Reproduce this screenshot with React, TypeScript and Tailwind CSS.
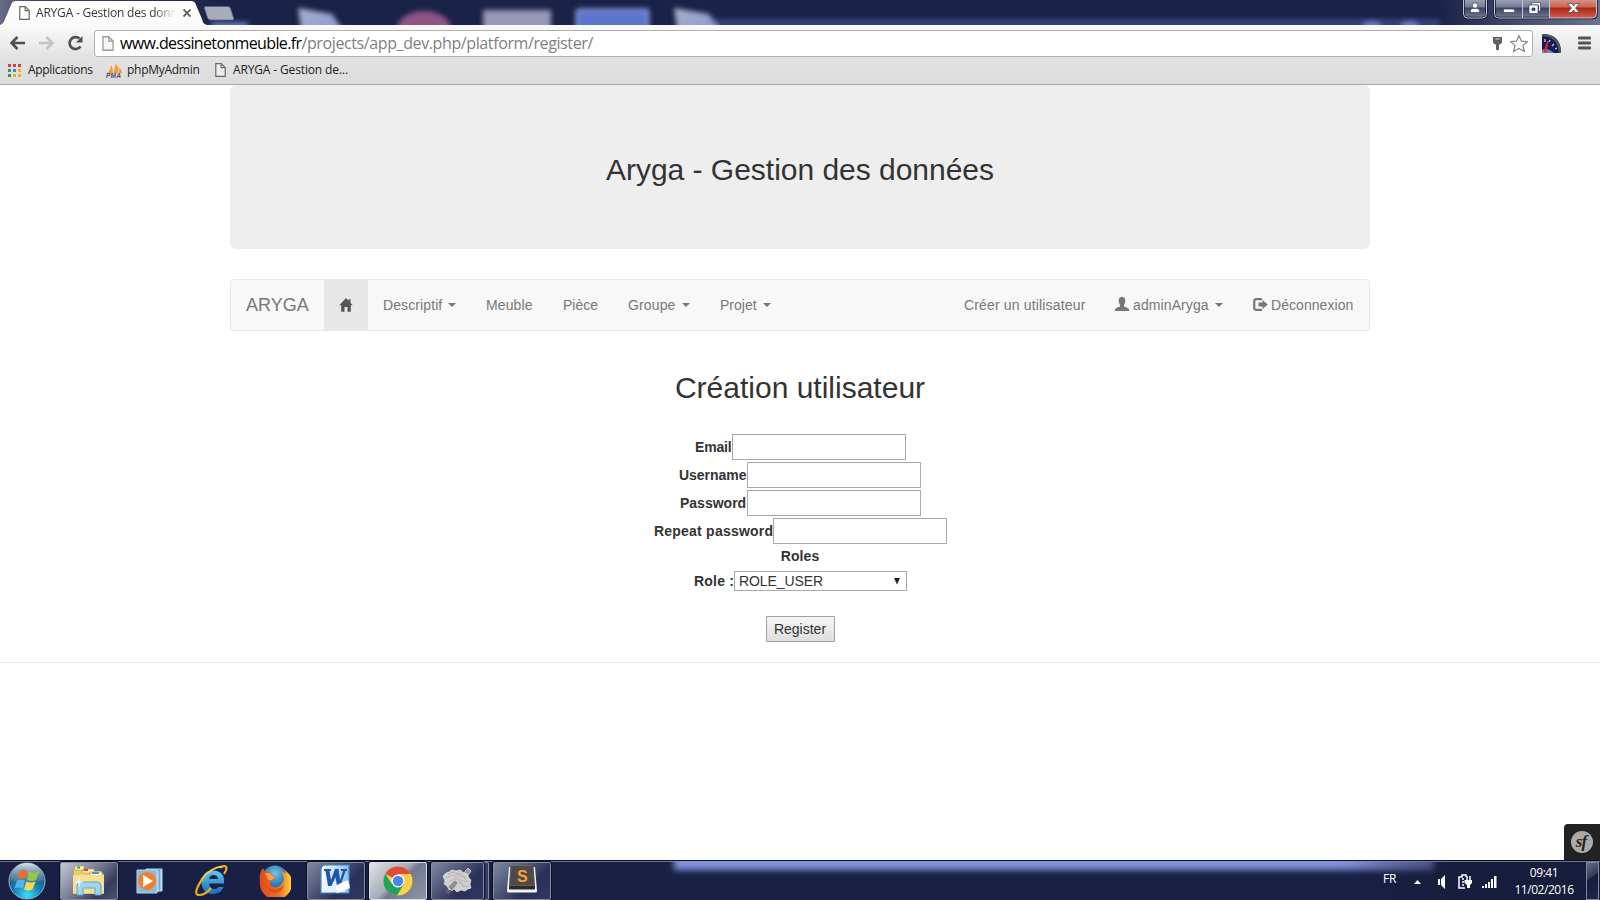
import type { ReactNode } from "react";

const UI = "font-['Open_Sans','Noto_Sans',sans-serif]";

function Page({ className = "", fill = "#fff", stroke = "#666" }: { className?: string; fill?: string; stroke?: string }) {
  return (
    <svg className={`shrink-0 ${className}`} viewBox="0 0 11 14" fill={fill} stroke={stroke} strokeWidth="1.2">
      <path d="M.8.7h5.4l4 4v8.600H.8z" />
      <path d="M6.200.7v4h4" fill="none" />
    </svg>
  );
}

function TitleBar() {
  return (
    <div className="relative h-[25px] overflow-hidden bg-[#1b2247]">
      <div className="absolute inset-0 bg-[linear-gradient(90deg,#686b88_0,#3d4263_35px,#1b2247_230px,#1b2247_1440px,#454c6e_1520px,#6a7391_1600px)]" />
      <svg className="absolute inset-0" width="1600" height="25">
        <defs>
          <filter id="soft" filterUnits="userSpaceOnUse" x="180" y="-10" width="1300" height="60"><feGaussianBlur stdDeviation="2.600" /></filter>
          <linearGradient id="folder" x1="0" y1="0" x2="1" y2="1"><stop offset="0" stopColor="#a9b2c4" /><stop offset="1" stopColor="#8593e2" /></linearGradient>
        </defs>
        <g filter="url(#soft)">
          <rect x="715" y="19" width="725" height="16" fill="#36427a" />
          <path d="M289 8l34 6 15 22h-45z" transform="translate(9)" fill="url(#folder)" />
          <ellipse cx="424" cy="29" rx="27" ry="18" fill="#8e5485" />
          <rect x="483" y="10" width="68" height="30" fill="#9898b8" />
          <rect x="577" y="10" width="71" height="30" rx="2" fill="#5c74cc" stroke="#8396df" strokeWidth="3" />
          <path d="M674 8l35 6 15 22h-46z" fill="url(#folder)" />
          <path d="M210 22h38v14h-30z" fill="#5e78bf" />
          <ellipse cx="1372" cy="26" rx="9" ry="5" fill="#6c7cc5" />
          <ellipse cx="1410" cy="26" rx="9" ry="5" fill="#6c7cc5" />
        </g>
        <defs><linearGradient id="tab" x1="0" y1="0" x2="0" y2="1"><stop offset="0" stopColor="#fff" /><stop offset="1" stopColor="#fafafa" /></linearGradient></defs>
        <path d="M0 25c3-1 4-3 5-6l6-14c1-3 2-4 5-4h174c4 0 5 1 6 4l6 14c1 4 2 5 5 6z" fill="url(#tab)" />
        <path d="M206 6.500h21c2 0 3 .5 3.500 2l3 9c.5 2 0 2.500-2 2.500h-20c-3 0-3.500-1-4-2.500l-3-9c-.5-1.500 0-2 1.500-2z" fill="#a6acba" stroke="#5b6181" strokeWidth=".7" />
      </svg>
      <div className={`relative flex h-[25px] items-center ${UI}`}>
        <Page className="ml-[19px] h-[14px] w-[11px]" />
        <span className="ml-[6px] w-[140px] overflow-hidden whitespace-nowrap bg-[linear-gradient(90deg,#333_118px,transparent_140px)] bg-clip-text text-[12px] leading-[18px] tracking-[-0.2px] text-transparent">ARYGA - Gestion des données</span>
        <svg className="ml-[7px]" width="8" height="8" stroke="#5c5c5c" strokeWidth="1.800"><path d="M.5.5l7 7M7.500.5l-7 7" /></svg>
      </div>
      <svg className="absolute right-0 top-0" width="140" height="20">
        <defs>
          <linearGradient id="cap" x1="0" y1="0" x2="0" y2="1"><stop offset="0" stopColor="#a5a9bc" /><stop offset=".45" stopColor="#777c96" /><stop offset=".5" stopColor="#3c4261" /><stop offset="1" stopColor="#737995" /></linearGradient>
          <linearGradient id="close" x1="0" y1="0" x2="0" y2="1"><stop offset="0" stopColor="#dc9d91" /><stop offset=".45" stopColor="#c76554" /><stop offset=".5" stopColor="#ae2613" /><stop offset="1" stopColor="#d4604c" /></linearGradient>
        </defs>
        <path d="M3.500-2v16q0 4 4 4h15q4 0 4-4v-16z" fill="url(#cap)" stroke="#14182f" strokeWidth="2.500" />
        <path d="M3.500-2v16q0 4 4 4h15q4 0 4-4v-16z" fill="none" stroke="#c2c6d3" strokeWidth="1" />
        <path d="M34.500-2v16q0 4 4 4h94q4 0 4-4v-16z" fill="url(#cap)" stroke="#14182f" strokeWidth="2.500" />
        <path d="M89.500-2v20h43q4 0 4-4v-16z" fill="url(#close)" />
        <path d="M34.500-2v16q0 4 4 4h94q4 0 4-4v-16zM62.500 0v18M89.500 0v18" fill="none" stroke="#c2c6d3" strokeWidth="1" />
        <g fill="#fff" stroke="#3b405a" strokeWidth=".7">
          <circle cx="15" cy="5.500" r="2.700" /><path d="M10.500 12.500v-2q0-2 2.500-2h4q2.500 0 2.500 2v2z" />
          <path d="M43.500 9h11v3.500h-11z" />
          <path d="M71.500 2.500h9v8.500h-2v-6h-7z" /><path fillRule="evenodd" d="M69 5h9v8.500h-9zM72 8v2.500h3v-2.500z" />
          <path d="M107.500 3.500h4l2 2.500 2-2.500h4l-4 4.500 4 4.500h-4l-2-2.500-2 2.500h-4l4-4.500z" />
        </g>
      </svg>
    </div>
  );
}

const appColors = ["bg-[#e33b3b]", "bg-[#e33b3b]", "bg-[#e33b3b]", "bg-[#2e9b57]", "bg-[#3f83e8]", "bg-[#f2b01e]", "bg-[#2e9b57]", "bg-[#f2b01e]", "bg-[#f2b01e]"];

function BrowserBars() {
  return (
    <div className={`h-[60px] border-b border-[#a9a9a9] bg-[linear-gradient(#fafafa_0,#e2e2e2_32px,#dcdcdc)] ${UI}`}>
      <div className="flex h-[32px] items-center pt-[4px]">
        <svg className="ml-[9px]" width="17" height="16" fill="none" stroke="#505050" strokeWidth="2.600"><path d="M16 8H3M8.500 2L2.500 8l6 6" /></svg>
        <svg className="ml-[12px]" width="17" height="16" fill="none" stroke="#c4c4c4" strokeWidth="2.600"><path d="M1 8h13M8.500 2l6 6-6 6" /></svg>
        <svg className="ml-[12px]" width="16" height="16" fill="none" stroke="#505050" strokeWidth="2.700"><path d="M13.500 11.500A6 6 0 1 1 12.500 3.500" /><path d="M15.500 1v6.500H9z" fill="#505050" stroke="none" /></svg>
        <div className="ml-[11px] flex h-[27px] w-[1439px] items-center rounded-[3px] border border-[#b0b0b0] bg-white">
          <Page className="ml-[7px] h-[15px] w-[12px]" stroke="#999" fill="#f7f7f7" />
          <span className="ml-[6px] mt-[-1px] whitespace-nowrap text-[16px] leading-[22px] text-black"><span className="tracking-[-0.63px]">www.dessinetonmeuble.fr</span><span className="tracking-[-0.39px] text-[#808080]">/projects/app_dev.php/platform/register/</span></span>
          <svg className="ml-auto" width="11" height="15" fill="#606060"><path d="M1 1h9v5.500l-2 2H7v5l-1.500 1-1.500-1v-5H3l-2-2z" /><path d="M3.500 3h4" stroke="#ddd" /></svg>
          <svg className="ml-[6px] mr-[3px]" width="20" height="19" fill="#fff" stroke="#858585" strokeWidth="1.200" strokeLinejoin="round"><path d="M10 1.500l2.500 5.700 6 .4-4.600 4 1.600 6L10 14.400l-5.500 3.200 1.600-6-4.600-4 6-.4z" /></svg>
        </div>
        <svg className="ml-[9px]" width="19" height="19">
          <path d="M0 0q19 0 19 19H0z" fill="#171b58" /><path d="M0 1q17 0 18 18" fill="none" stroke="#4e5952" strokeWidth="2.500" /><path d="M0 16q5-3 12 3H0z" fill="#6588bd" />
          <path d="M6 7L4 18H2z" fill="#f22" stroke="#f22" /><path d="M3 5v3M8 6l-1 2M12 10l-2 2M15 14l-2 1" stroke="#c4c9e6" strokeWidth="1.300" />
        </svg>
        <svg className="ml-[17px]" width="13" height="14" fill="#555"><rect width="13" height="3" rx="1" y=".5" /><rect width="13" height="3" rx="1" y="5.500" /><rect width="13" height="3" rx="1" y="10.500" /></svg>
      </div>
      <div className="flex h-[26px] items-center text-[12px] leading-[18px] text-[#222]">
        <div className="ml-[8px] grid h-[13px] w-[13px] grid-cols-3 gap-[2px]">{appColors.map((c, i) => <i key={i} className={c} />)}</div>
        <span className="ml-[7px] w-[66px] whitespace-nowrap tracking-[-0.3px]">Applications</span>
        <svg className="ml-[12px]" width="17" height="15"><path d="M1 10Q5 7 5 2q3 4 1 9zM7 10q3-5 2-10 5 5 3 10zM13 10q1-3 0-6 3 3 3 6z" fill="#f29a2e" /><text x="0" y="14.500" fontSize="6.500" fontFamily="Liberation Sans" fontWeight="bold" fontStyle="italic" fill="#474a7c" textLength="15">PMA</text></svg>
        <span className="ml-[4px] w-[73px] whitespace-nowrap tracking-[-0.28px]">phpMyAdmin</span>
        <Page className="ml-[15px] h-[14px] w-[11px]" fill="#eee" />
        <span className="ml-[7px] whitespace-nowrap tracking-[-0.14px]">ARYGA - Gestion de...</span>
      </div>
    </div>
  );
}

const Caret = () => <i className="ml-[6px] inline-block border-x-4 border-t-4 border-x-transparent border-t-[#777] align-middle" />;
const Item = ({ className, children }: { className: string; children: ReactNode }) => <a className={`flex h-[50px] shrink-0 items-center whitespace-nowrap pl-[15px] ${className}`}>{children}</a>;

function NavBar() {
  return (
    <nav className="mt-[30px] flex h-[52px] rounded-[4px] border border-[#e7e7e7] bg-[#f8f8f8] text-[14px] leading-[20px] text-[#777]">
      <Item className="w-[93px] text-[18px]">ARYGA</Item>
      <Item className="w-[44px] bg-[#e7e7e7]"><svg width="14" height="14" fill="#555"><path d="M7 0L.3 7.200h1.900V13.700H5.500V9h3v4.700h3.300V7.200h1.900L11.500 4.800V1.300h-2v1.400z" /></svg></Item>
      <Item className="w-[103px] tracking-[0.1px]">Descriptif<Caret /></Item>
      <Item className="w-[77px] tracking-[0.13px]">Meuble</Item>
      <Item className="w-[65px]">Pièce</Item>
      <Item className="w-[92px] tracking-[0.14px]">Groupe<Caret /></Item>
      <Item className="w-[81px]">Projet<Caret /></Item>
      <Item className="ml-auto w-[151px] tracking-[0.16px]">Créer un utilisateur</Item>
      <Item className="w-[138px] tracking-[0.1px]"><svg className="mr-[4px] mt-[-2px]" width="14" height="14" fill="#777"><path d="M7 0c2.300 0 3.500 1.600 3.300 4-.1 2-.8 3-1.300 3.800v1.500c0 .7 4.800 1.500 5 3V14H0v-1.700c.2-1.500 5-2.300 5-3V7.800C4.500 7 3.800 6 3.700 4 3.500 1.600 4.700 0 7 0z" /></svg>adminAryga<Caret /></Item>
      <Item className="w-[131px] tracking-[0.06px]"><svg className="mr-[3px] mt-[-2px]" width="15" height="13"><path d="M9 1.200H3.500Q1.200 1.200 1.200 3.500v6q0 2.300 2.300 2.300H9" fill="none" stroke="#777" strokeWidth="2.200" /><path d="M5.500 4.500H9.500V2l5.300 4.500-5.300 4.500V8.500h-4z" fill="#777" /></svg>Déconnexion</Item>
    </nav>
  );
}

function Field({ label, pad, width, spacing }: { label: string; pad: string; width: string; spacing: string }) {
  return (
    <div className={`flex h-[28px] items-center ${pad}`}>
      <label className={`shrink-0 whitespace-nowrap font-bold ${width} ${spacing}`}>{label}</label>
      <input className="h-[26px] w-[174px] border border-[#a9a9a9] bg-white px-1 outline-none" />
    </div>
  );
}

function Taskbar() {
  const btn = "flex h-[38px] shrink-0 items-center justify-center rounded-[2px] border border-[#858ba3] shadow-[0_0_0_1px_#0b1029]";
  const dark = "bg-[linear-gradient(135deg,#8087a2_0,#535b7b_35%,#29315a_65%,#2f3860)]";
  return (
    <footer className="relative flex h-[40px] w-full items-center overflow-hidden border-t border-[#0b102b] bg-[#192044]">
      <div className="absolute inset-x-0 top-0 h-px bg-[#6c7291]" />
      <div className="absolute left-[674px] top-[-7px] h-[16px] w-[760px] bg-[linear-gradient(90deg,#8493dc_660px,#666fa8)] blur-[3px]" />
      <div className="absolute right-0 top-[1px] h-[39px] w-[250px] bg-[linear-gradient(90deg,transparent,#141933_120px)] opacity-50" />
      <svg className="relative ml-[8px] shrink-0" width="38" height="38" viewBox="0 0 38 38">
        <defs>
          <radialGradient id="orb" cx=".5" cy=".9" r=".9"><stop offset="0" stopColor="#39dcff" /><stop offset=".45" stopColor="#147caf" /><stop offset="1" stopColor="#24445d" /></radialGradient>
          <linearGradient id="orbTop" x1="0" y1="0" x2="0" y2="1"><stop offset="0" stopColor="#d6e2eb" /><stop offset="1" stopColor="#597f9b" stopOpacity=".5" /></linearGradient>
        </defs>
        <circle cx="19" cy="19" r="18" fill="url(#orb)" stroke="#91b2c4" />
        <path d="M2 18a17 17 0 0 1 34 0q-17 5-34 0z" fill="url(#orbTop)" />
        <path d="M11.500 9q4-2.500 8 0l-2 8q-4-2-8 0z" fill="#ef6b2b" /><path d="M21 9.500q4 2 10 0l-3 8.500q-4 2-9 0z" fill="#98c64a" />
        <path d="M9 18.500q4-2 8 0l-2 8q-4-2-8.500 0z" fill="#59b1e9" /><path d="M18.500 19.500q4 2 9 0l-3 8q-4 2-8.500 0z" fill="#ffd64c" />
      </svg>
      <div className={`relative ml-[14px] w-[58px] ${btn} bg-[linear-gradient(135deg,#c6c9d4,#777c93_45%,#343b5e_75%,#4b526f)]`}>
        <svg width="34" height="31" viewBox="0 0 34 31">
          <path d="M2 3h10l2 3h15l3 4v19H1z" fill="#eacb72" /><path d="M3 1h9v4H3zM11 4h11v4H11zM18 7h12v4H18z" fill="#fff2b3" stroke="#a9924e" strokeWidth=".5" />
          <path d="M5 1.500h3v2H5z" fill="#26b33b" /><path d="M12 4h4v2h-4z" fill="#d64326" /><path d="M20 7h7v2h-7z" fill="#3a9fdc" />
          <path d="M1 10h31v18H1z" fill="#f4df94" /><path d="M5 30v-9q0-4 4-4h16q4 0 4 4v9h-6v-7H11v7z" fill="#9ed5ed" stroke="#5ba7cc" /><path d="M7 11l1 5 4 1-4 1-1 5-1-5-4-1 4-1z" fill="#e4fbff" />
        </svg>
      </div>
      <svg className="relative ml-[18px] shrink-0" width="28" height="26"><path d="M10 1h16v22H10z" fill="#6ea9d2" stroke="#bbddec" /><path d="M22 3v21M25 2v21" stroke="#d9f0fa" /><path d="M1 2h20v23H1z" fill="#8cb9d6" stroke="#b9d6e7" /><circle cx="11" cy="13" r="9" fill="#f57d27" /><path d="M7 7l10 6-10 6z" fill="#fff" /></svg>
      <svg className="relative ml-[31px] shrink-0" width="34" height="34" viewBox="0 0 34 34">
        <defs><linearGradient id="ie" x1="0" y1="0" x2="0" y2="1"><stop stopColor="#62c7f4" /><stop offset="1" stopColor="#166eb8" /></linearGradient></defs>
        <path fillRule="evenodd" d="M18 6.500c8 0 12 5 11 13H14c.5 4 3 5.500 6 5.500 2 0 3-1 3.500-2h5c-2 5-6 7-11 7-7 0-11-5-11-12S11 6.500 18 6.500zM14 15h9c-.4-3-2-4-4.500-4S14.500 12 14 15z" fill="url(#ie)" />
        <path d="M25 3.500c9-4 7 2 4 6.500M8 14C1 24-1 31 4 31c4 0 9-3 12-7" fill="none" stroke="#e9aa24" strokeWidth="2.200" /><path d="M7 15C12 8 20 3 27 2.500" fill="none" stroke="#f5cc48" strokeWidth="1.800" />
      </svg>
      <svg className="relative ml-[30px] shrink-0" width="32" height="32" viewBox="0 0 32 32">
        <defs>
          <linearGradient id="fox" x1="0" y1="0" x2="1" y2="0"><stop stopColor="#e2481f" /><stop offset=".6" stopColor="#ee7320" /><stop offset="1" stopColor="#ffd83f" /></linearGradient>
          <radialGradient id="globe" cx=".5" cy=".3" r=".6"><stop stopColor="#6fc4e8" /><stop offset="1" stopColor="#1d5f9f" /></radialGradient>
        </defs>
        <circle cx="16" cy="13.500" r="13" fill="url(#globe)" />
        <path d="M2 6l2-3 2 4 5 0 3 4 3 1.500-3 2.500-3 1 0 3q2 4 7 3 4-1 5-4 3-1 1-8l-3-5 6 4-1-4 4 4q4 5 3 11A15 14.800 0 0 1 1 17Q0 11 2 6z" fill="url(#fox)" />
        <path d="M8 21q4 5 10 3 5-1 7-5-1 8-8 9-7-1-9-7z" fill="#c93a1c" opacity=".6" />
        <path d="M6 8l5 0 3 3.500 2 1-4 3-3-1z" fill="#f7a24a" />
      </svg>
      <div className={`relative ml-[16px] w-[58px] ${btn} ${dark}`}>
        <svg className="mb-[3px] mr-[2px]" width="30" height="30" viewBox="0 0 30 30">
          <defs><linearGradient id="doc" x1="0" y1="0" x2="1" y2="0"><stop stopColor="#fff" /><stop offset="1" stopColor="#8dbdec" /></linearGradient></defs>
          <path d="M1 6q0-5 5-5h23v28H1z" fill="url(#doc)" stroke="#3e86cf" strokeWidth="1.200" /><path d="M3 18h22v10H3z" fill="#e9f2fb" />
          <path d="M4 5h7v2H9.500l1.500 9 4-11h3.500l1.500 11 3-9h-2V5h6v2h-1.500L20.500 22H17l-1.500-9-4 9H8L5.500 7H4z" fill="#1759a8" />
          <path d="M15 22l13-6 2 8-13 5z" fill="#fff" stroke="#c5d7ea" strokeWidth=".5" />
        </svg>
      </div>
      <div className={`relative ml-[4px] w-[58px] ${btn} border-[#d8dce3] bg-[linear-gradient(135deg,#e2e4e8,#a7abb8_45%,#737990_55%,#9094a5)]`}>
        <svg width="30" height="30" viewBox="0 0 30 30"><circle cx="15" cy="15" r="14.500" fill="#ffd048" /><path d="M15 15L2.300 7.800A14.500 14.500 0 0 1 27.700 8H15z" fill="#df4b3e" /><path d="M2.300 7.800A14.500 14.500 0 0 0 14 29.500l7-11.500H9z" fill="#23a25d" /><path d="M15 8h12.700L21 18.500z" fill="#ffd048" /><circle cx="15" cy="15" r="6.500" fill="#fff" /><circle cx="15" cy="15" r="5.200" fill="#4688ed" /></svg>
      </div>
      <div className={`relative ml-[4px] w-[53px] ${btn} ${dark}`}>
        <svg width="32" height="30" viewBox="0 0 32 30"><path d="M21 8L26 2l3 3-5 7z" fill="#999" stroke="#ddd" strokeWidth=".8" /><path d="M1 10l3-3 3-1 3-2 4 1 4-1 4 3 3 1 2 4 2 2-1 4 1 4-3 1-3 2-4-1-4 2-3-3-5 1-2-4-3-2 1-3z" fill="#cfcfcf" stroke="#efefef" strokeWidth=".6" /><path d="M6 8q5-3 9 0t9 3M4 12q7-5 12 0t10 3M8 16q6-6 10 0t8 4M15 7q7 1 9 8M10 19q8-6 12 2" fill="none" stroke="#999" strokeWidth=".8" strokeDasharray="1.500 1" /><path d="M6 21l7-7 3 3-6 8z" fill="#909090" stroke="#d0d0d0" strokeWidth=".7" /><path d="M4 22l5 4-3 3-3-3z" fill="#5c5c5c" /></svg>
      </div>
      <div className="h-[38px] w-[5px] rounded-r-[2px] border-y border-r border-[#858ba3] bg-[#333b60]" />
      <div className={`relative ml-[4px] w-[58px] ${btn} ${dark}`}>
        <svg className="mb-[4px]" width="32" height="28" viewBox="0 0 32 28"><path d="M3 2h26l2 24q0 1.500-1.500 1.500h-27Q1 27.500 1 26z" fill="#f5f5f5" /><path d="M5 1h22l2 20v2.500q0 1-1 1H4q-1 0-1-1V21z" fill="#2c2c2c" /><path d="M6 .5h20q1.500 0 1.500 1.500l1 18.500h-25L4.500 2q0-1.500 1.500-1.500z" fill="#4c4b49" stroke="#777" strokeWidth=".6" /><text x="11" y="16.500" fontFamily="Liberation Sans" fontSize="16" fontWeight="bold" fill="#ff9c38">S</text></svg>
      </div>
      <div className={`relative ml-auto flex h-full shrink-0 items-center text-white ${UI}`}>
        <span className="w-[15px] translate-y-[-2px] text-[12px] tracking-[-0.1px]">FR</span>
        <svg className="ml-[15px] mt-[2px]" width="9" height="5" fill="#fff"><path d="M1 5l3.500-4L8 5z" /></svg>
        <svg className="ml-[16px] mt-[2px]" width="8" height="14" fill="#fff"><path d="M0 4h2v6H0zM3 4l4-4v14l-4-4z" /></svg>
        <svg className="ml-[12px] mt-[2px]" width="14" height="15" fill="none" stroke="#fff" strokeWidth="1.500"><path d="M8 3V1H4v2H1v11h6M9 2v4M12 2v4" /><path d="M4 5h2M4 8h2M4 11h2" /><path d="M6.500 6h7.500v3l-2 2v3H9v-3L6.500 9z" fill="#fff" stroke="none" /></svg>
        <svg className="ml-[10px] mt-[2px]" width="15" height="12" fill="#fff"><path d="M0 10h2v2H0zM3 8h2v4H3zM6 6h2v6H6zM9 3h2v9H9zM12 0h2.500v12H12z" /></svg>
        <div className="ml-[15px] mt-[1px] w-[64px] text-center text-[12px] leading-[17px] tracking-[-0.46px]"><div>09:41</div><div>11/02/2016</div></div>
        <div className="ml-[10px] h-[38px] w-[13px] border border-[#8087a0] bg-[linear-gradient(145deg,#666c82,#353b57_38%,#151b3b_42%,#202747)]" />
        <i className="w-px" />
      </div>
    </footer>
  );
}

export default function App() {
  return (
    <div className="flex h-[900px] w-[1600px] flex-col overflow-hidden bg-white font-['Liberation_Sans',Arial,sans-serif] text-[14px] leading-[20px] text-[#333]">
      <TitleBar />
      <BrowserBars />
      <main className="flex min-h-0 flex-1 flex-col items-center">
        <div className="w-[1140px]">
          <header className="flex h-[164px] justify-center rounded-[6px] bg-[#eee] pt-[68px]"><h2 className="text-[30px] leading-[33px] tracking-[-0.02px]">Aryga - Gestion des données</h2></header>
          <NavBar />
        </div>
        <h2 className="mt-[40px] text-[30px] leading-[33px]">Création utilisateur</h2>
        <form className="mt-[29px] w-[1140px]">
          <Field label="Email" pad="pl-[465px]" width="w-[37px]" spacing="tracking-[-0.15px]" />
          <Field label="Username" pad="pl-[449px]" width="w-[68px]" spacing="tracking-[-0.02px]" />
          <Field label="Password" pad="pl-[450px]" width="w-[67px]" spacing="tracking-[0px]" />
          <Field label="Repeat password" pad="pl-[424px]" width="w-[119px]" spacing="tracking-[0.22px]" />
          <div className="flex h-[23px] items-center justify-center pb-[2px] font-bold tracking-[0.1px]">Roles</div>
          <div className="flex h-[26px] items-center pl-[464px]">
            <label className="w-[40px] whitespace-nowrap font-bold tracking-[0.2px]">Role :</label>
            <div className="flex h-[20px] w-[173px] items-center justify-between border border-[#a9a9a9] bg-white pl-[4px] pr-[5px]"><span className="tracking-[-0.08px]">ROLE_USER</span><svg width="8" height="7" fill="#222"><path d="M1 0h6L4 6.500z" /></svg></div>
          </div>
          <button type="button" className="mx-auto mt-[22px] flex h-[26px] w-[69px] items-center justify-center rounded-[1px] border border-[#a0a0a0] bg-linear-to-b from-[#f6f6f6] to-[#dedede] text-[14px]">Register</button>
        </form>
        <hr className="mt-[20px] w-full border-[#eee]" />
        <div className="mt-auto flex h-[36px] w-[36px] items-center justify-center self-end rounded-tl-[4px] bg-[#222]">
          <div className="flex h-[22px] w-[22px] items-center justify-center rounded-full bg-[#aaa] pb-[2px] pr-[2px] font-['Liberation_Serif',serif] text-[17px] font-bold italic leading-none tracking-[-1px] text-[#222]">sf</div>
        </div>
      </main>
      <Taskbar />
    </div>
  );
}
